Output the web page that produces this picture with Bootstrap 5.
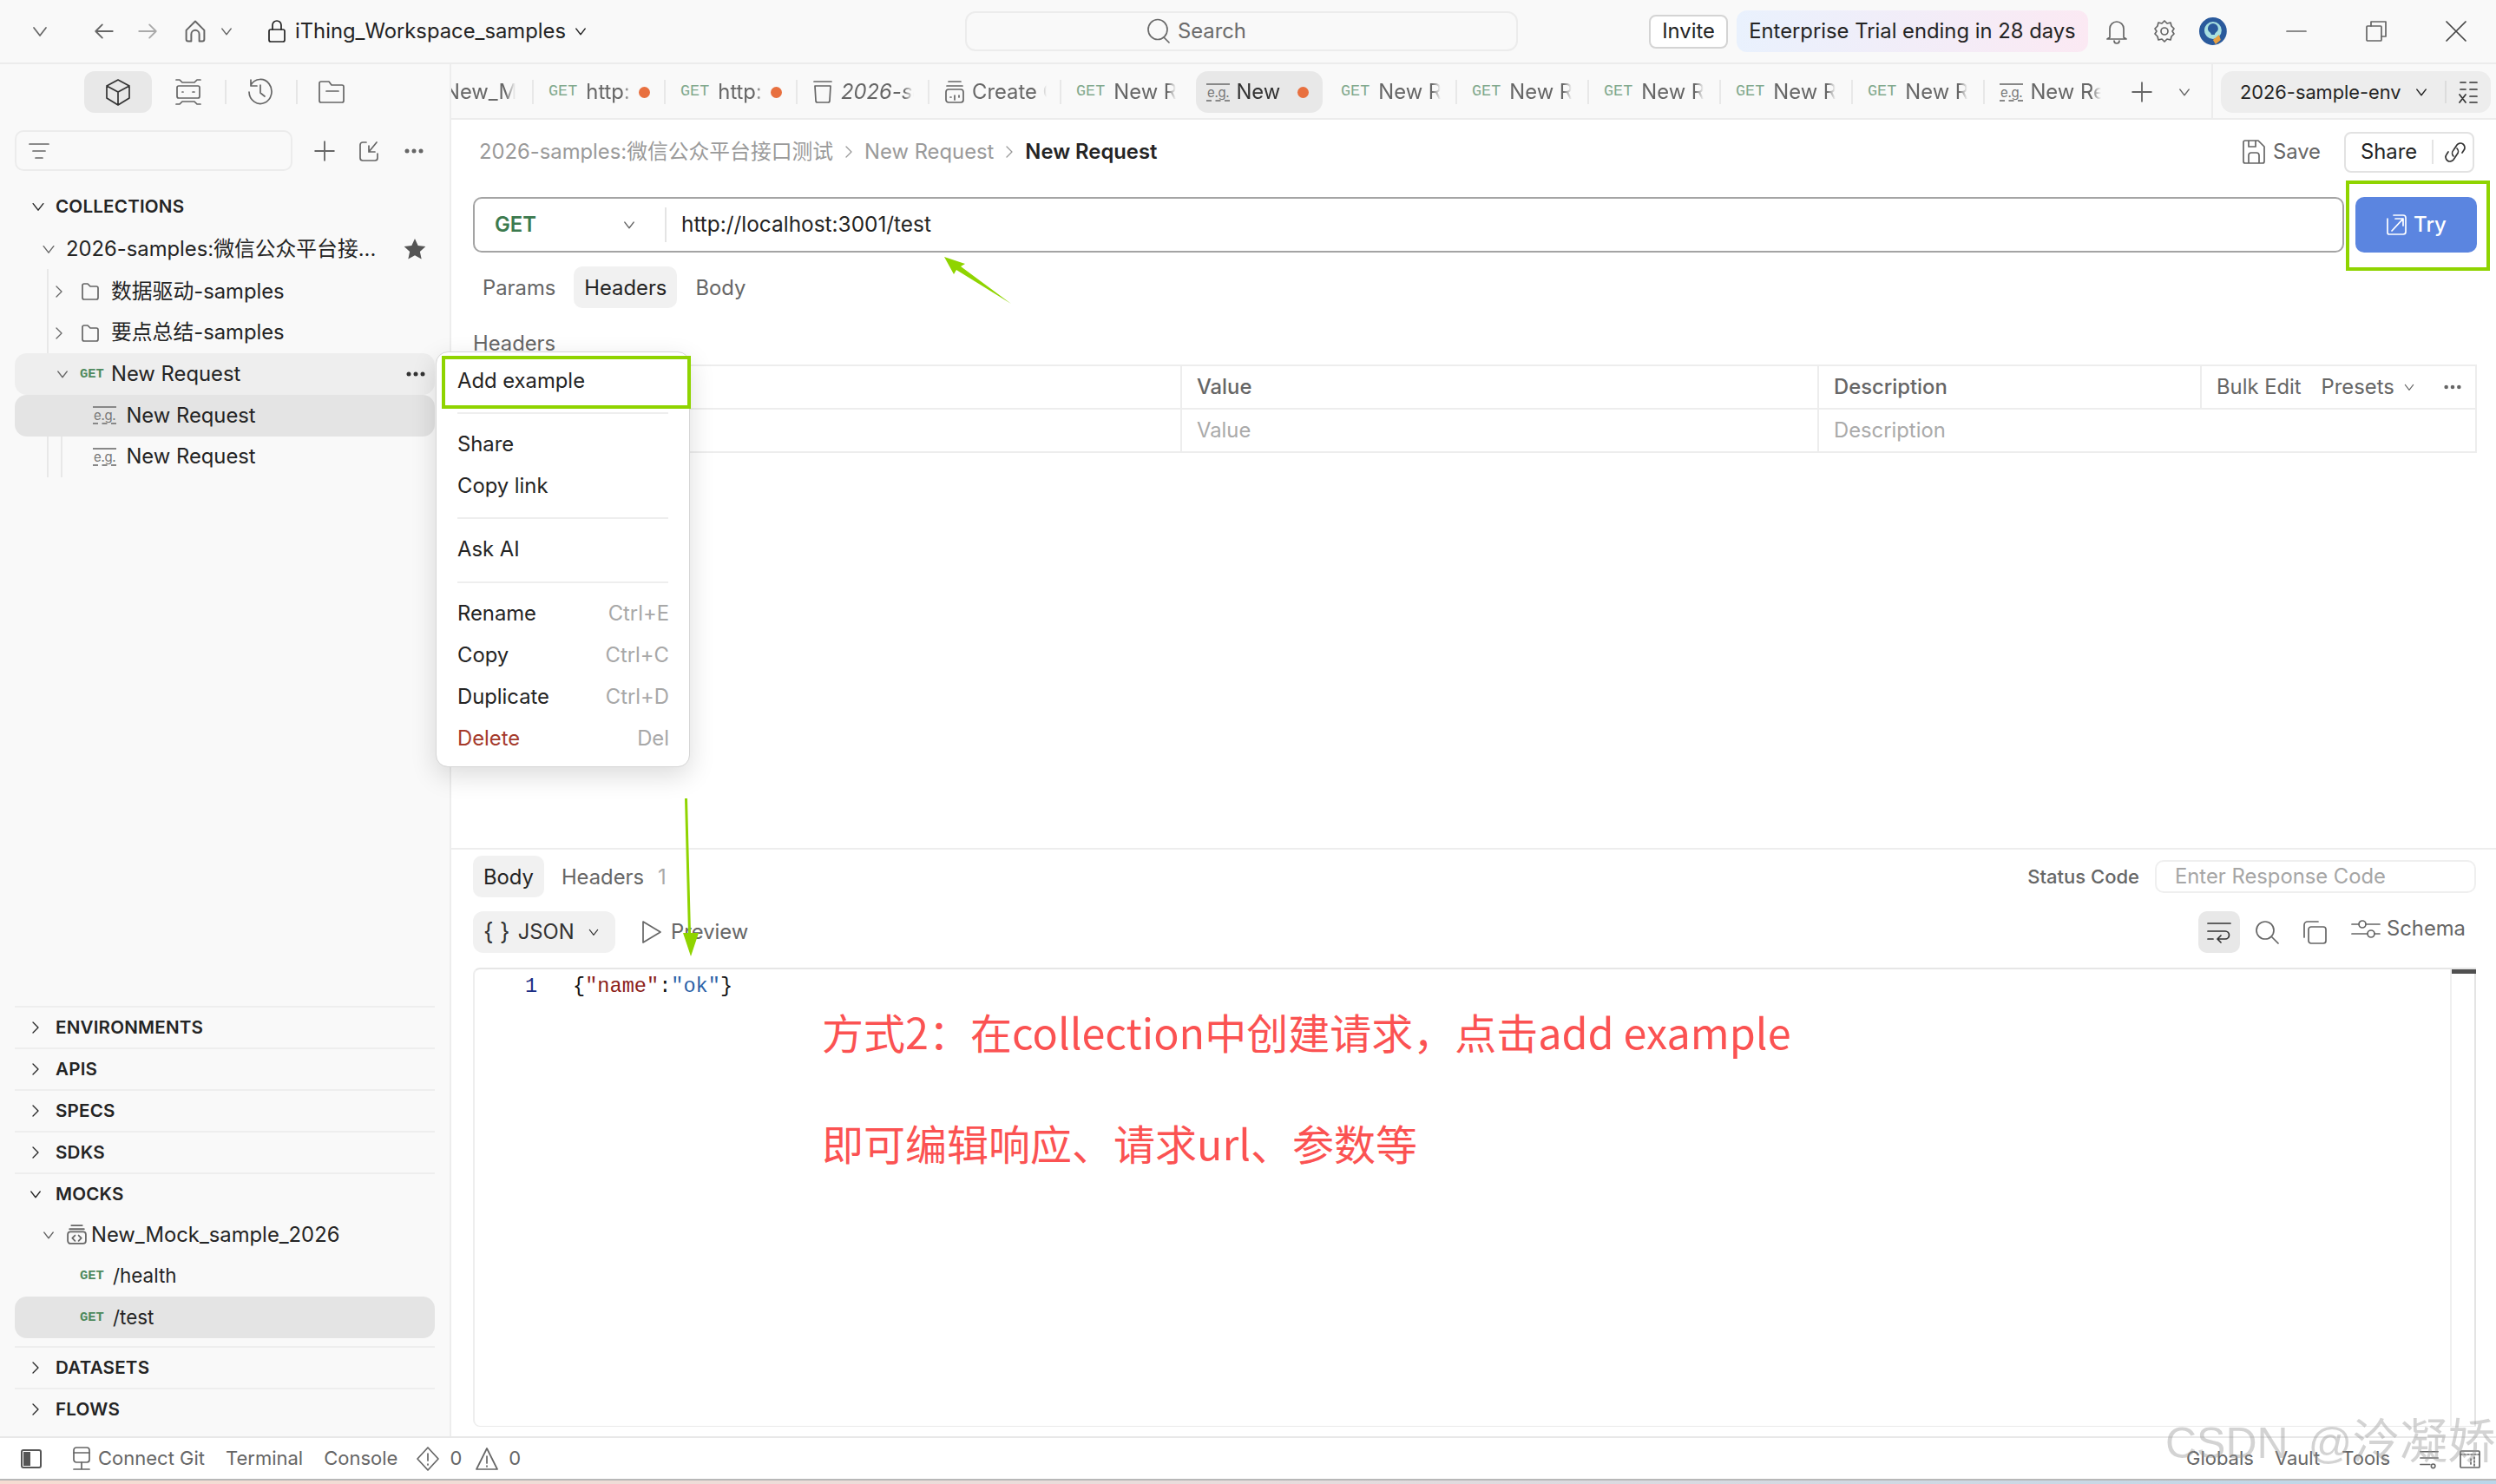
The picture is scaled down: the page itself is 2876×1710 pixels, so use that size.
<!DOCTYPE html>
<html lang="zh">
<head>
  <meta charset="UTF-8">
  <title>New Request</title>
  <link href="https://cdn.jsdelivr.net/npm/bootstrap@5.3.3/dist/css/bootstrap.min.css" rel="stylesheet">
  <style>
    html, body { margin: 0; height: 100%; overflow: hidden; }
    body { font-family: Inter, "Noto Sans CJK SC", sans-serif; font-size: 23.8px; color: #242424; background: #fff; line-height: 1.2; }
    .app-root { width: 2876px; height: 1710px; position: relative; overflow: hidden; }
    .ic { fill: none; stroke: currentColor; stroke-width: 1.7; stroke-linecap: round; stroke-linejoin: round; flex: none; display: block; }
    .ic-fill { fill: currentColor; stroke: none; }
    .muted-ic { color: #666; }

    /* top bar */
    .top-bar { height: 74px; background: #f9f9f9; border-bottom: 2px solid #ececec; flex: none; padding-left: 34px; }
    .search-box { width: 640px; height: 46px; margin-left: 434px; border: 2px solid #ececec; border-radius: 12px; color: #6b6b6b; padding-left: 207px; }
    .invite-btn { width: 91px; height: 39px; border: 2px solid #d4d4d4; border-radius: 8px; background: #fff; margin-left: 151px; }
    .trial-pill { width: 408px; height: 48px; margin-left: 10px; border-radius: 12px; background: linear-gradient(90deg, #e9f1fd, #fbe9f3); white-space: nowrap; }
    .win-btn { width: 92px; }

    /* sidebar */
    .side-col { width: 520px; flex: none; background: #f9f9f9; border-right: 2px solid #ededed; }
    .side-icons { height: 64px; padding-top: 8px; }
    .side-icon { width: 78px; height: 48px; border-radius: 12px; }
    .side-icon.on { background: #e8e8e8; }
    .side-sep { width: 2px; height: 28px; background: #e6e6e6; }
    .filter-box { width: 320px; height: 47px; border: 2px solid #ececec; border-radius: 10px; margin-left: 17px; padding-left: 14px; }
    .tree-head { height: 48px; font-size: 20.6px; font-weight: 600; letter-spacing: .2px; margin: 0 17px; }
    .tree-head .ic { margin: 0 10px 0 17px; }
    .tree-row { height: 47.7px; margin: 0 17px; border-radius: 14px; white-space: nowrap; position: relative; }
    .tree-row.first-row { height: 50px; }
    .tree-row.hover-row { background: #eeeeee; }
    .tree-row.sel-row { background: #e4e4e4; }
    .tree-guides { position: relative; }
    .guide-a, .guide-b { position: absolute; width: 2px; background: #e8e8e8; top: 0; bottom: 0; }
    .guide-a { left: 54px; }
    .guide-b { left: 70px; top: 192px; }
    .row-end { position: absolute; right: 10px; top: 50%; transform: translateY(-50%); }
    .get-tag { font-family: "Liberation Mono", monospace; font-weight: 700; font-size: 15.5px; color: #4f8a5e; width: 28px; flex: none; }
    .eg-tag { font-size: 15px; line-height: 17px; color: #777; border-top: 2px solid #888; border-bottom: 2px dashed #888; padding: 0 1px; flex: none; letter-spacing: -.3px; }
    .mock-path { font-size: 22.4px; margin-left: 10px; }
    .side-foot { margin-top: auto; padding-bottom: 8px; }
    .foot-sec { margin: 0 17px; border-top: 2px solid #eeeeee; }
    .foot-head { height: 46px; font-size: 20.6px; font-weight: 600; letter-spacing: .2px; }
    .foot-head .ic { margin: 0 14px 0 15px; }
    .foot-sec .tree-row { margin: 0; }
    .mock-list { padding-bottom: 9px; }

    /* tabs */
    .tab-strip { height: 64px; background: #f9f9f9; border-bottom: 2px solid #ececec; flex: none; }
    .doc-tab { width: 152px; height: 48px; flex: none; position: relative; padding-left: 17px; white-space: nowrap; color: #666; overflow: hidden; }
    .doc-tab::after { content: ""; position: absolute; right: 0; top: 10px; height: 28px; width: 2px; background: #e8e8e8; }
    .doc-tab.first-tab { width: 95px; padding-left: 0; }
    .doc-tab.active-tab { width: 146px; margin-left: 3px; background: #e8e8e8; border-radius: 14px; padding-left: 12px; color: #333; }
    .doc-tab.after-active { width: 155px; padding-left: 21px; }
    .doc-tab.active-tab::after, .doc-tab.no-sep::after, .doc-tab.before-active::after { display: none; }
    .doc-tab.last-tab { width: 141px; }
    .tab-get { font-family: "Liberation Mono", monospace; font-size: 18.5px; color: #82a98d; margin-right: 10px; flex: none; }
    .tab-text { overflow: hidden; flex: none; white-space: nowrap; -webkit-mask-image: linear-gradient(90deg, #000 86%, transparent); mask-image: linear-gradient(90deg, #000 86%, transparent); }
    .tab-text.w-dirty { width: 52px; }
    .tab-text.w-clean { width: 72px; }
    .tab-text.w-new { width: 82px; }
    .tab-text.w-active { width: 60px; }
    .tab-text.w-doc { width: 84px; font-style: italic; }
    .tab-text.w-create { width: 86px; }
    .tab-text.w-first { width: 82px; margin-left: -8px; }
    .dirty-dot { width: 13px; height: 13px; border-radius: 50%; background: #e8703f; flex: none; margin-left: 9px; }
    .env-wrap { width: 328px; height: 62px; border-left: 2px solid #ececec; padding-left: 9px; margin-left: auto; flex: none; }
    .env-pill { width: 311px; height: 48px; background: #ededed; border-radius: 14px; padding-left: 22px; white-space: nowrap; }
    .env-name { font-size: 21.8px; width: 186px; flex: none; }
    .env-sep { width: 2px; height: 26px; background: #dcdcdc; margin: 0 13px 0 18px; }

    /* request */
    .main-col { min-width: 0; }
    .req-part { padding: 13px 22px 0 25px; }
    .crumb-row { height: 48px; }
    .crumb-off { color: #9a9a9a; white-space: nowrap; }
    .share-box { width: 150px; height: 47px; border: 2px solid #e2e2e2; border-radius: 8px; margin-left: 27px; }
    .share-sep { width: 2px; height: 28px; background: #e4e4e4; }
    .url-row { margin-top: 28px; height: 64px; gap: 13px; }
    .url-box { flex: 1; height: 64px; border: 2px solid #a4a4a4; border-radius: 10px; padding-left: 23px; }
    .method-txt { color: #3c7a4e; font-weight: 600; width: 146px; }
    .url-sep { width: 2px; height: 40px; background: #e4e4e4; margin: 0 17px 0 32px; }
    .url-txt { font-size: 24.4px; }
    .try-btn { width: 140px; height: 64px; background: #5b85e0; border: 0; border-radius: 10px; color: #fff; font-size: 24px; font-weight: 500; }
    .try-btn:hover { background: #5b85e0; color: #fff; }
    .sub-tab { height: 48px; padding: 2px 12px 0; border-radius: 10px; color: #666; margin-right: 9px; }
    .sub-tab.on { background: #f1f1f1; color: #242424; }
    .sub-row { margin-top: 16px; margin-left: -1px; }
    .sec-label { color: #666; margin-top: 26px; line-height: 29px; height: 39px; }
    .hdr-table { --bs-border-color: #ededed; table-layout: fixed; width: 2309px; margin: 0; border-width: 2px; border-color: #ededed; }
    .hdr-table td, .hdr-table th { height: 50px; padding: 0 17px; vertical-align: middle; font-weight: 500; color: #666; font-size: 23.8px; border-width: 2px; }
    .hdr-table td.ph-cell { font-weight: 400; color: #aaa; }
    .col-key { width: 815px; } .col-val { width: 734px; } .col-desc { width: 441px; }
    .hdr-table td.bulk-cell { color: #666; font-weight: 400; white-space: nowrap; padding-right: 0; }

    /* response */
    .resp-part { height: 678px; flex: none; border-top: 2px solid #ededed; padding: 7px 23px 11px 25px; }
    .resp-top { height: 48px; }
    .status-label { font-size: 22px; font-weight: 500; color: #666; }
    .code-input { width: 370px; height: 38px; border: 2px solid #efefef; border-radius: 10px; padding-left: 21px; margin-left: 18px; color: #a6a6a6; font-size: 23.8px; }
    .resp-tools { height: 48px; margin-top: 16px; }
    .json-pill { width: 164px; height: 48px; background: #f1f1f1; border-radius: 12px; padding-left: 12px; white-space: nowrap; color: #333; }
    .wrap-btn { width: 48px; height: 48px; background: #e8e8e8; border-radius: 10px; }
    .schema-btn { margin-left: 28px; margin-bottom: 7px; }
    .editor-box { flex: 1; margin-top: 17px; border-top: 2px solid #e6e6e6; border-left: 2px solid #eeeeee; border-bottom: 1px solid #eaeaea; border-top-left-radius: 8px; border-bottom-left-radius: 8px; position: relative; min-height: 0; }
    .code-line { font-family: "Liberation Mono", monospace; font-size: 23.6px; padding: 6px 0 0 58px; line-height: 27px; color: #111; white-space: pre; }
    .ln-no { color: #1c2f86; display: inline-block; width: 55px; }
    .js-key { color: #8c2119; }
    .js-val { color: #2b62a8; }
    .gutter-bar { position: absolute; right: 0; top: 0; bottom: 0; width: 30px; border-left: 2px solid #f0f0f0; border-right: 2px solid #e4e4e4; }
    .gutter-thumb { height: 5px; background: #505050; margin: 0 -2px 0 0; }

    /* status bar */
    .status-bar { height: 49px; flex: none; padding-left: 24px; background: #fff; border-top: 2px solid #e8e8e8; color: #666; white-space: nowrap; font-size: 22px; position: relative; }
    .status-bar .status-right { margin-left: auto; width: 357px; height: 100%; position: relative; }
    .end-strip { height: 6px; flex: none; border-top: 2px solid #b8b8b8; background: linear-gradient(90deg, #f6dcd2, #e8dcdc 50%, #b9d6ea); }

    /* context menu */
    .ctx-menu { display: block; position: absolute; left: 502px; top: 405px; width: 293px; height: 479px; padding: 9px 0 0; border: 1px solid #d6d6d6; border-radius: 14px; box-shadow: 0 10px 30px rgba(0,0,0,.14); font-size: 23.8px; z-index: 5; }
    .ctx-menu .dropdown-item { height: 48px; padding: 0 23px 0 24px; display: flex; align-items: center; justify-content: space-between; color: #242424; }
    .ctx-menu hr ~ .dropdown-item { padding-top: 3px; }
    .ctx-menu .dropdown-divider { margin: 0 24px; border-top: 2px solid #eeeeee; opacity: 1; }
    .ctx-menu .dropdown-item.danger-item { color: #a53a2b; }
    .ctx-key { color: #a8a8a8; }
    .gap-a { margin-top: 12px !important; margin-bottom: 10px !important; }
    .gap-b { margin-top: 13px !important; margin-bottom: 10px !important; }
    .gap-c { margin-top: 14px !important; margin-bottom: 10px !important; }

    /* annotations drawn on the picture */
    .anno-box { position: absolute; border: 4px solid #8fd400; z-index: 6; }
    .anno-add { left: 509px; top: 410px; width: 287px; height: 61px; }
    .anno-try { left: 2703px; top: 208px; width: 166px; height: 104px; }
    .anno-arrows { position: absolute; left: 0; top: 0; z-index: 7; pointer-events: none; }
    .anno-text { position: absolute; left: 947px; color: #fb5252; font-family: "Noto Sans CJK SC", sans-serif; font-size: 48px; font-weight: 400; line-height: 70px; white-space: nowrap; z-index: 6; }
    .anno-lat { font-size: 48.5px; }
    .anno-one { top: 1153px; }
    .anno-two { top: 1281px; }
    .water-mark { position: absolute; left: 2495px; top: 1626px; font-family: "Liberation Sans", "Noto Sans CJK SC", sans-serif; font-size: 50px; word-spacing: 9px; line-height: 70px; color: rgba(150,150,150,.42); white-space: nowrap; z-index: 8; }
    .water-cjk { font-size: 55px; }
  </style>
</head>
<body>
<svg width="0" height="0" class="position-absolute">
  <symbol id="chev-d" viewBox="0 0 24 24"><path d="M5 8l7 9 7-9"/></symbol>
  <symbol id="chev-r" viewBox="0 0 24 24"><path d="M8 4l8 8-8 8"/></symbol>
  <symbol id="dots" viewBox="0 0 24 24"><circle class="ic-fill" cx="4" cy="12" r="2.500"/><circle class="ic-fill" cx="12" cy="12" r="2.500"/><circle class="ic-fill" cx="20" cy="12" r="2.500"/></symbol>
  <symbol id="plus" viewBox="0 0 24 24"><path d="M12 2v20M2 12h20"/></symbol>
  <symbol id="folder" viewBox="0 0 24 24"><path d="M3 5a2 2 0 0 1 2-2h4l3 3h7a2 2 0 0 1 2 2v11a2 2 0 0 1-2 2H5a2 2 0 0 1-2-2z"/></symbol>
  <symbol id="mock-i" viewBox="0 0 24 24"><path d="M6 2h12M4 6h16"/><rect x="2" y="9" width="20" height="13" rx="3"/><path d="M10 13l-3 3 3 3M14 13l3 3-3 3"/></symbol>
</svg>

<div class="app-root d-flex flex-column">
  <!-- top bar -->
  <div class="top-bar d-flex align-items-center">
    <svg class="ic muted-ic" width="24" height="24"><use href="#chev-d"/></svg>
    <svg class="ic muted-ic" width="26" height="26" viewBox="0 0 24 24" style="margin-left:49px"><path d="M21 12H4M10 5l-7 7 7 7"/></svg>
    <svg class="ic ms-4" width="26" height="26" viewBox="0 0 24 24" color="#aaa"><path d="M3 12h17M14 5l7 7-7 7"/></svg>
    <svg class="ic muted-ic" width="28" height="30" viewBox="0 0 24 26" style="margin-left:28px"><path d="M3 12 12 3l9 9v9a2 2 0 0 1-2 2h-3v-7a4 4 0 0 0-8 0v7H5a2 2 0 0 1-2-2z"/></svg>
    <svg class="ic muted-ic" width="18" height="18" style="margin-left:13px"><use href="#chev-d"/></svg>
    <svg class="ic" width="22" height="28" viewBox="0 0 22 28" stroke-width="2.200" style="margin-left:38px"><rect x="2" y="12" width="18" height="14" rx="2"/><path d="M6 12V7a5 5 0 0 1 10 0v5"/></svg>
    <span class="text-nowrap" style="margin-left:10px">iThing_Workspace_samples</span>
    <svg class="ic ms-2" width="18" height="18"><use href="#chev-d"/></svg>
    <div class="search-box d-flex align-items-center gap-2">
      <svg class="ic" width="28" height="30" viewBox="0 0 28 30"><ellipse cx="13" cy="13" rx="11" ry="11.500"/><path d="M20 22l6 6"/></svg>
      <span>Search</span>
    </div>
    <div class="invite-btn d-flex align-items-center justify-content-center">Invite</div>
    <div class="trial-pill d-flex align-items-center justify-content-center">Enterprise Trial ending in 28 days</div>
    <svg class="ic muted-ic" width="26" height="30" viewBox="0 0 26 30" style="margin-left:20px"><path d="M5 22V12a8 8 0 0 1 16 0v10l3 2H2zM10 26a3 3 0 0 0 6 0"/></svg>
    <svg class="ic muted-ic" width="26" height="28" viewBox="0 0 26 28" style="margin-left:29px"><path d="M13 2l3 3 4-1 1 4 3 3-2 3 2 3-3 3-1 4-4-1-3 3-3-3-4 1-1-4-3-3 2-3-2-3 3-3 1-4 4 1z"/><circle cx="13" cy="14" r="4"/></svg>
    <svg width="34" height="34" viewBox="0 0 34 34" style="margin-left:26px" class="flex-none"><circle cx="17" cy="17" r="16" fill="#2a5a9c"/><circle cx="17" cy="16" r="10" fill="#a8e0e0"/><path d="M11 14a6 6 0 0 1 12 0c0 4-4 4-4 7h-4c0-3-4-3-4-7z" fill="#2a5a9c"/><path d="M17 27l7-6 2 6-6 5z" fill="#e8a040"/></svg>
    <div class="d-flex align-items-center" style="margin-left:33px">
      <div class="win-btn d-flex justify-content-center"><svg class="ic muted-ic" width="24" height="4" viewBox="0 0 24 4" stroke-width="2.500"><path d="M1 2h22"/></svg></div>
      <div class="win-btn d-flex justify-content-center"><svg class="ic muted-ic" width="26" height="26" viewBox="0 0 26 26" stroke-width="2"><rect x="2" y="7" width="17" height="17" rx="1"/><path d="M7 7V2h17v17h-5"/></svg></div>
      <div class="win-btn d-flex justify-content-center"><svg class="ic" width="26" height="26" viewBox="0 0 26 26" color="#444"><path d="M2 2l22 22M24 2 2 24"/></svg></div>
    </div>
  </div>

  <div class="d-flex flex-grow-1" style="min-height:0">
    <!-- sidebar -->
    <div class="side-col d-flex flex-column">
      <div class="side-icons d-flex align-items-start">
        <div class="d-flex align-items-center" style="margin-left:97px">
          <div class="side-icon on d-flex align-items-center justify-content-center">
            <svg class="ic" width="30" height="32" viewBox="0 0 30 32" stroke-width="2" color="#333"><path d="M15 2l13 7v14l-13 8-13-8V9zM2 9l13 7 13-7M15 16v15"/></svg>
          </div>
          <div class="side-icon d-flex align-items-center justify-content-center" style="width:84px">
            <svg class="ic muted-ic" width="30" height="32" viewBox="0 0 30 32"><path d="M1 2h4l3 3h14l3-3h4M1 30h4l3-3h14l3 3h4"/><rect x="2" y="9" width="26" height="14" rx="2"/><path d="M8 16h1M20 16h2"/></svg>
          </div>
          <div class="side-sep"></div>
          <div class="side-icon d-flex align-items-center justify-content-center">
            <svg class="ic muted-ic" width="30" height="32" viewBox="0 0 30 32" stroke-width="2"><path d="M4 8a13 14 0 1 1-2 8M4 2v7h7M15 8v9l5 4"/></svg>
          </div>
          <div class="side-sep" style="margin-left:2px"></div>
          <div class="side-icon d-flex align-items-center justify-content-center">
            <svg class="ic muted-ic" width="32" height="28" viewBox="0 0 32 28" stroke-width="2"><path d="M2 4a2 2 0 0 1 2-2h9l3 4h12a2 2 0 0 1 2 2v16a2 2 0 0 1-2 2H4a2 2 0 0 1-2-2zM10 13h14"/></svg>
          </div>
        </div>
      </div>
      <div class="d-flex align-items-center" style="margin-top:12px">
        <div class="filter-box d-flex align-items-center">
          <svg class="ic muted-ic" width="24" height="20" viewBox="0 0 24 20"><path d="M1 2h22M5 10h14M8 18h8"/></svg>
        </div>
        <svg class="ic muted-ic" width="26" height="26" style="margin-left:24px"><use href="#plus"/></svg>
        <svg class="ic muted-ic" width="24" height="26" viewBox="0 0 24 26" style="margin-left:26px"><path d="M9 3H5a3 3 0 0 0-3 3v15a3 3 0 0 0 3 3h14a3 3 0 0 0 3-3v-5M21 3 12 14M12 7v7h7"/></svg>
        <svg class="ic muted-ic" width="24" height="24" style="margin-left:28px"><use href="#dots"/></svg>
      </div>
      <div class="tree-head d-flex align-items-center" style="margin-top:17px">
        <svg class="ic" width="20" height="20" stroke-width="2"><use href="#chev-d"/></svg><span>COLLECTIONS</span>
      </div>
      <div class="tree-guides">
        <div class="guide-a" style="top:48px"></div>
        <div class="guide-b"></div>
        <div class="tree-row first-row d-flex align-items-center">
          <svg class="ic muted-ic" width="20" height="20" style="margin-left:29px"><use href="#chev-d"/></svg>
          <span style="margin-left:10px">2026-samples:微信公众平台接...</span>
          <svg class="row-end" width="26" height="26" viewBox="0 0 24 24"><path fill="#555" d="M12 1l3.400 7.400 8 .9-6 5.400 1.700 8L12 18.600l-7.100 4.100 1.700-8-6-5.400 8-.9z"/></svg>
        </div>
        <div class="tree-row d-flex align-items-center">
          <svg class="ic muted-ic" width="18" height="18" style="margin-left:42px"><use href="#chev-r"/></svg>
          <svg class="ic muted-ic" width="24" height="24" style="margin-left:15px"><use href="#folder"/></svg>
          <span style="margin-left:12px">数据驱动-samples</span>
        </div>
        <div class="tree-row d-flex align-items-center">
          <svg class="ic muted-ic" width="18" height="18" style="margin-left:42px"><use href="#chev-r"/></svg>
          <svg class="ic muted-ic" width="24" height="24" style="margin-left:15px"><use href="#folder"/></svg>
          <span style="margin-left:12px">要点总结-samples</span>
        </div>
        <div class="tree-row hover-row d-flex align-items-center">
          <svg class="ic muted-ic" width="18" height="18" style="margin-left:46px"><use href="#chev-d"/></svg>
          <span class="get-tag" style="margin-left:11px">GET</span>
          <span style="margin-left:8px">New Request</span>
          <svg class="ic row-end" width="24" height="24" color="#333"><use href="#dots"/></svg>
        </div>
        <div class="tree-row sel-row d-flex align-items-center">
          <span class="eg-tag" style="margin-left:90px">e.g.</span>
          <span style="margin-left:11px">New Request</span>
        </div>
        <div class="tree-row d-flex align-items-center">
          <span class="eg-tag" style="margin-left:90px">e.g.</span>
          <span style="margin-left:11px">New Request</span>
        </div>
      </div>

      <div class="side-foot">
        <div class="foot-sec"><div class="foot-head d-flex align-items-center"><svg class="ic" width="18" height="18" stroke-width="2"><use href="#chev-r"/></svg><span>ENVIRONMENTS</span></div></div>
        <div class="foot-sec"><div class="foot-head d-flex align-items-center"><svg class="ic" width="18" height="18" stroke-width="2"><use href="#chev-r"/></svg><span>APIS</span></div></div>
        <div class="foot-sec"><div class="foot-head d-flex align-items-center"><svg class="ic" width="18" height="18" stroke-width="2"><use href="#chev-r"/></svg><span>SPECS</span></div></div>
        <div class="foot-sec"><div class="foot-head d-flex align-items-center"><svg class="ic" width="18" height="18" stroke-width="2"><use href="#chev-r"/></svg><span>SDKS</span></div></div>
        <div class="foot-sec">
          <div class="foot-head d-flex align-items-center"><svg class="ic" width="18" height="18" stroke-width="2"><use href="#chev-d"/></svg><span>MOCKS</span></div>
          <div class="mock-list">
            <div class="tree-row d-flex align-items-center">
              <svg class="ic muted-ic" width="18" height="18" style="margin-left:30px"><use href="#chev-d"/></svg>
              <svg class="ic muted-ic" width="25" height="25" style="margin-left:11px"><use href="#mock-i"/></svg>
              <span style="margin-left:4px">New_Mock_sample_2026</span>
            </div>
            <div class="tree-row d-flex align-items-center">
              <span class="get-tag" style="margin-left:75px">GET</span>
              <span class="mock-path">/health</span>
            </div>
            <div class="tree-row sel-row d-flex align-items-center">
              <span class="get-tag" style="margin-left:75px">GET</span>
              <span class="mock-path">/test</span>
            </div>
          </div>
        </div>
        <div class="foot-sec"><div class="foot-head d-flex align-items-center"><svg class="ic" width="18" height="18" stroke-width="2"><use href="#chev-r"/></svg><span>DATASETS</span></div></div>
        <div class="foot-sec"><div class="foot-head d-flex align-items-center"><svg class="ic" width="18" height="18" stroke-width="2"><use href="#chev-r"/></svg><span>FLOWS</span></div></div>
      </div>
    </div>

    <!-- main -->
    <div class="main-col flex-grow-1 d-flex flex-column">
      <div class="tab-strip d-flex align-items-start" style="padding-top:8px">
        <div class="doc-tab first-tab d-flex align-items-center"><span class="tab-text w-first">New_Mo</span></div>
        <div class="doc-tab d-flex align-items-center"><span class="tab-get">GET</span><span class="tab-text w-dirty">http:</span><span class="dirty-dot"></span></div>
        <div class="doc-tab d-flex align-items-center"><span class="tab-get">GET</span><span class="tab-text w-dirty">http:</span><span class="dirty-dot"></span></div>
        <div class="doc-tab d-flex align-items-center">
          <svg class="ic muted-ic" width="24" height="28" viewBox="0 0 24 28" style="margin-right:9px"><path d="M2 2h20M3 7h18l-1 17a2 2 0 0 1-2 2H6a2 2 0 0 1-2-2z"/></svg>
          <span class="tab-text w-doc">2026-sa</span>
        </div>
        <div class="doc-tab d-flex align-items-center">
          <svg class="ic muted-ic" width="24" height="28" viewBox="0 0 24 28" style="margin-right:8px"><path d="M5 2h14M3 7h18"/><rect x="2" y="11" width="20" height="15" rx="3"/><path d="M7 20h1M12 23v-5M17 18v2"/></svg>
          <span class="tab-text w-create">Create C</span>
        </div>
        <div class="doc-tab before-active d-flex align-items-center"><span class="tab-get">GET</span><span class="tab-text w-clean">New Re</span></div>
        <div class="doc-tab active-tab d-flex align-items-center"><span class="eg-tag">e.g.</span><span class="tab-text w-active" style="margin-left:7px">New R</span><span class="dirty-dot" style="margin-left:11px"></span></div>
        <div class="doc-tab after-active d-flex align-items-center"><span class="tab-get">GET</span><span class="tab-text w-clean">New Re</span></div>
        <div class="doc-tab d-flex align-items-center"><span class="tab-get">GET</span><span class="tab-text w-clean">New Re</span></div>
        <div class="doc-tab d-flex align-items-center"><span class="tab-get">GET</span><span class="tab-text w-clean">New Re</span></div>
        <div class="doc-tab d-flex align-items-center"><span class="tab-get">GET</span><span class="tab-text w-clean">New Re</span></div>
        <div class="doc-tab d-flex align-items-center"><span class="tab-get">GET</span><span class="tab-text w-clean">New Re</span></div>
        <div class="doc-tab last-tab no-sep d-flex align-items-center"><span class="eg-tag">e.g.</span><span class="tab-text w-new" style="margin-left:8px">New Req</span></div>
        <div class="d-flex align-items-center" style="height:48px">
          <svg class="ic muted-ic" width="26" height="26" style="margin-left:27px"><use href="#plus"/></svg>
          <svg class="ic muted-ic" width="18" height="18" style="margin-left:27px"><use href="#chev-d"/></svg>
        </div>
        <div class="env-wrap d-flex align-items-start" style="margin-top:-8px;padding-top:8px">
          <div class="env-pill d-flex align-items-center">
            <span class="env-name">2026-sample-env</span>
            <svg class="ic" width="18" height="18" style="margin-left:14px"><use href="#chev-d"/></svg>
            <div class="env-sep"></div>
            <svg class="ic" width="24" height="28" viewBox="0 0 24 28" color="#333"><path d="M3 3h6M14 3h8M3 11h6M14 11h8M14 19h8M14 26h8M2 17l7 9M9 17l-7 9"/></svg>
          </div>
        </div>
      </div>

      <div class="req-part flex-grow-1">
        <div class="crumb-row d-flex align-items-center">
          <span class="crumb-off" style="margin-left:7px">2026-samples:微信公众平台接口测试</span>
          <svg class="ic" width="18" height="18" color="#999" style="margin:0 9px"><use href="#chev-r"/></svg>
          <span class="crumb-off">New Request</span>
          <svg class="ic" width="18" height="18" color="#999" style="margin:0 9px"><use href="#chev-r"/></svg>
          <span class="fw-semibold">New Request</span>
          <div class="ms-auto d-flex align-items-center" style="margin-right:3px">
            <svg class="ic muted-ic" width="28" height="30" viewBox="0 0 28 30"><path d="M2 4a2 2 0 0 1 2-2h15l7 7v17a2 2 0 0 1-2 2H4a2 2 0 0 1-2-2zM8 2v7h8V2M8 28V19a3 3 0 0 1 3-3h6a3 3 0 0 1 3 3v9"/></svg>
            <span class="ms-2" style="color:#666">Save</span>
            <div class="share-box d-flex align-items-center">
              <span style="margin-left:17px">Share</span>
              <div class="share-sep" style="margin-left:17px"></div>
              <svg class="ic" width="26" height="30" viewBox="0 0 26 30" style="margin-left:12px" color="#333"><path d="M11 20a5 5 0 0 1 0-7l4-6a5 5 0 0 1 8 6l-2 3M15 11a5 5 0 0 1 0 7l-4 6a5 5 0 0 1-8-6l2-3"/></svg>
            </div>
          </div>
        </div>
        <div class="url-row d-flex">
          <div class="url-box d-flex align-items-center">
            <span class="method-txt">GET</span>
            <svg class="ic muted-ic" width="18" height="18"><use href="#chev-d"/></svg>
            <div class="url-sep"></div>
            <span class="url-txt">http://localhost:3001/test</span>
          </div>
          <button class="btn try-btn d-flex align-items-center justify-content-center gap-2 p-0">
            <svg class="ic" width="24" height="26" viewBox="0 0 24 26" stroke-width="2"><path d="M9 2h11a3 3 0 0 1 3 3v16a3 3 0 0 1-3 3H4a2 2 0 0 1-2-2V6M7 20 20 6M11 6h9v8"/></svg>
            <span>Try</span>
          </button>
        </div>
        <div class="sub-row d-flex">
          <div class="sub-tab d-flex align-items-center">Params</div>
          <div class="sub-tab on d-flex align-items-center">Headers</div>
          <div class="sub-tab d-flex align-items-center">Body</div>
        </div>
        <div class="sec-label">Headers</div>
        <table class="table table-bordered hdr-table">
          <colgroup><col class="col-key"><col class="col-val"><col class="col-desc"><col></colgroup>
          <tr>
            <th></th><th>Value</th><th>Description</th>
            <td class="bulk-cell">
              <div class="d-flex align-items-center">
                <span>Bulk Edit</span><span style="margin-left:23px">Presets</span>
                <svg class="ic" width="16" height="16" style="margin-left:9px"><use href="#chev-d"/></svg>
                <svg class="ic" width="22" height="22" style="margin-left:31px"><use href="#dots"/></svg>
              </div>
            </td>
          </tr>
          <tr><td class="ph-cell"></td><td class="ph-cell">Value</td><td class="ph-cell" colspan="2">Description</td></tr>
        </table>
      </div>

      <div class="resp-part d-flex flex-column">
        <div class="resp-top d-flex align-items-center">
          <div class="sub-tab on d-flex align-items-center" style="margin-right:8px">Body</div>
          <div class="sub-tab d-flex align-items-center">Headers<span class="ms-3" style="color:#aaa">1</span></div>
          <span class="status-label ms-auto">Status Code</span>
          <div class="code-input d-flex align-items-center">Enter Response Code</div>
        </div>
        <div class="resp-tools d-flex align-items-center">
          <div class="json-pill d-flex align-items-center">
            <span style="font-size:27px;margin-right:9px">{ }</span><span>JSON</span>
            <svg class="ic" width="16" height="16" style="margin-left:14px"><use href="#chev-d"/></svg>
          </div>
          <svg class="ic muted-ic" width="24" height="28" viewBox="0 0 24 28" style="margin-left:30px"><path d="M2 2l20 12L2 26z"/></svg>
          <span style="color:#666;margin-left:10px">Preview</span>
          <div class="wrap-btn d-flex align-items-center justify-content-center ms-auto">
            <svg class="ic" width="28" height="26" viewBox="0 0 28 26" color="#333"><path d="M1 3h26M1 12h20a4 4 0 0 1 0 9h-9M16 17l-4 4 4 4M1 21h6"/></svg>
          </div>
          <svg class="ic muted-ic" width="28" height="28" viewBox="0 0 28 28" style="margin-left:17px"><circle cx="12" cy="12" r="10"/><path d="M20 20l7 7"/></svg>
          <svg class="ic muted-ic" width="28" height="28" viewBox="0 0 28 28" style="margin-left:27px"><path d="M2 20V6a4 4 0 0 1 4-4h12"/><rect x="7" y="8" width="20" height="19" rx="3"/></svg>
          <div class="schema-btn d-flex align-items-center">
            <svg class="ic muted-ic" width="34" height="24" viewBox="0 0 34 24"><path d="M1 7h8M17 7h16M1 18h18M27 18h6"/><circle cx="13" cy="7" r="4"/><circle cx="23" cy="18" r="4"/></svg>
            <span style="color:#666;margin-left:7px;margin-right:12px">Schema</span>
          </div>
        </div>
        <div class="editor-box">
          <div class="code-line"><span class="ln-no">1</span>{<span class="js-key">"name"</span>:<span class="js-val">"ok"</span>}</div>
          <div class="gutter-bar"><div class="gutter-thumb"></div></div>
        </div>
      </div>
    </div>
  </div>

  <!-- status bar -->
  <div class="status-bar d-flex align-items-center">
    <svg class="ic" width="24" height="24" viewBox="0 0 24 24" color="#555"><rect x="1" y="2" width="22" height="20" rx="2" stroke-width="2"/><rect class="ic-fill" x="3" y="4" width="8" height="16"/></svg>
    <svg class="ic" width="24" height="30" viewBox="0 0 24 30" style="margin-left:34px"><rect x="3" y="2" width="18" height="17" rx="3"/><path d="M3 8h18M12 19v8M3 27h18"/></svg>
    <span style="margin-left:7px">Connect Git</span>
    <span style="margin-left:24px">Terminal</span>
    <span style="margin-left:24px">Console</span>
    <svg class="ic" width="28" height="30" viewBox="0 0 28 30" style="margin-left:21px"><path d="M14 2l12 13-12 13L2 15zM14 9v8M14 21v1"/></svg>
    <span style="margin-left:11px">0</span>
    <svg class="ic" width="26" height="28" viewBox="0 0 26 28" style="margin-left:16px"><path d="M13 2l12 24H1zM13 11v8M13 22v1"/></svg>
    <span style="margin-left:12px">0</span>
    <div class="status-right d-flex align-items-center">
      <span>Globals</span><span style="margin-left:24px">Vault</span><span style="margin-left:25px">Tools</span>
      <svg class="ic" width="24" height="26" viewBox="0 0 26 26" style="margin-left:33px"><path d="M2 4h22M2 12h22M2 20h12"/><circle cx="18" cy="22" r="2.500"/></svg>
      <svg class="ic" width="24" height="24" viewBox="0 0 24 24" style="margin-left:23px"><rect x="1" y="3" width="22" height="19" rx="1"/><path d="M1 7h22M17 10v10M13 12v8" stroke-dasharray="2 2"/></svg>
    </div>
  </div>
  <div class="end-strip"></div>

  <!-- context menu -->
  <div class="dropdown-menu ctx-menu">
    <a class="dropdown-item" href="#">Add example</a>
    <hr class="dropdown-divider gap-a">
    <a class="dropdown-item" href="#">Share</a>
    <a class="dropdown-item" href="#">Copy link</a>
    <hr class="dropdown-divider gap-b">
    <a class="dropdown-item" href="#">Ask AI</a>
    <hr class="dropdown-divider gap-c">
    <a class="dropdown-item" href="#"><span>Rename</span><span class="ctx-key">Ctrl+E</span></a>
    <a class="dropdown-item" href="#"><span>Copy</span><span class="ctx-key">Ctrl+C</span></a>
    <a class="dropdown-item" href="#"><span>Duplicate</span><span class="ctx-key">Ctrl+D</span></a>
    <a class="dropdown-item danger-item" href="#"><span>Delete</span><span class="ctx-key">Del</span></a>
  </div>

  <!-- annotations -->
  <div class="anno-box anno-add"></div>
  <div class="anno-box anno-try"></div>
  <svg class="anno-arrows" width="2876" height="1710">
    <path d="M1088 296l24 8-5 3 58 43-63-39-3 5z" fill="#8fd400"/>
    <path d="M789 920h3l4 155h9l-9 27-9-27h6z" fill="#8fd400"/>
  </svg>
  <div class="anno-text anno-one">方式<span class="anno-lat">2</span>：在<span class="anno-lat">collection</span>中创建请求，点击<span class="anno-lat">add example</span></div>
  <div class="anno-text anno-two">即可编辑响应、请求<span class="anno-lat">url</span>、参数等</div>
  <div class="water-mark">CSDN @<span class="water-cjk">泠凝娇</span></div>
</div>
<script src="https://cdn.jsdelivr.net/npm/bootstrap@5.3.3/dist/js/bootstrap.bundle.min.js"></script>
</body>
</html>
